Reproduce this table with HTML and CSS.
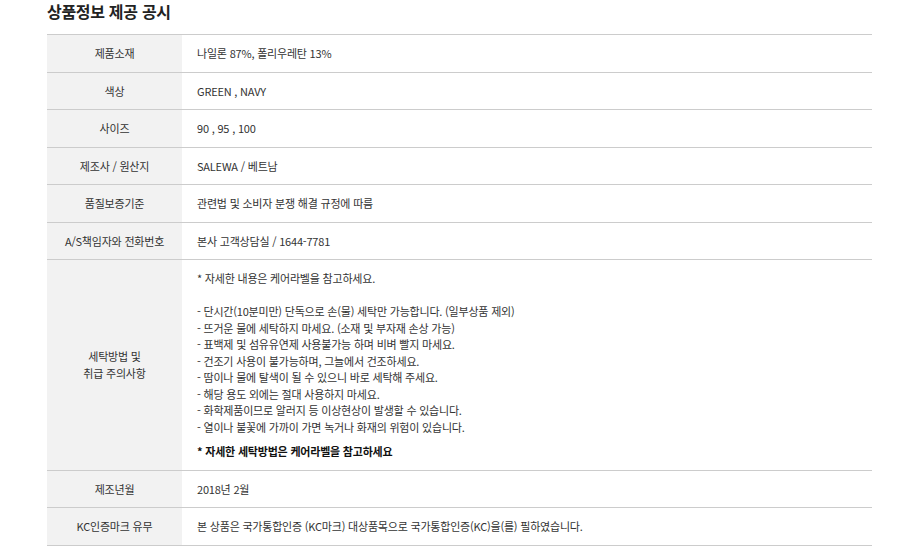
FILE: index.html
```html
<!DOCTYPE html>
<html lang="ko">
<head>
  <meta charset="UTF-8" />
  <meta name="viewport" content="width=device-width, initial-scale=1" />
  <title>상품정보 제공 공시</title>
  <link rel="stylesheet" href="styles.css">
</head>
<body>
  <div class="notice">
    <h2 class="notice-title">상품정보 제공 공시</h2>
    <table class="info-table">
      <tr>
        <th>제품소재</th>
        <td>나일론 87%, 폴리우레탄 13%</td>
      </tr>
      <tr>
        <th>색상</th>
        <td>GREEN , NAVY</td>
      </tr>
      <tr>
        <th>사이즈</th>
        <td>90 , 95 , 100</td>
      </tr>
      <tr>
        <th>제조사 / 원산지</th>
        <td>SALEWA / 베트남</td>
      </tr>
      <tr>
        <th>품질보증기준</th>
        <td>관련법 및 소비자 분쟁 해결 규정에 따름</td>
      </tr>
      <tr>
        <th>A/S책임자와 전화번호</th>
        <td>본사 고객상담실 / 1644-7781</td>
      </tr>
      <tr>
        <th>세탁방법 및<br>취급 주의사항</th>
        <td>
          <p>* 자세한 내용은 케어라벨을 참고하세요.</p>
          <p class="gap">- 단시간(10분미만) 단독으로 손(물) 세탁만 가능합니다. (일부상품 제외)<br>
          - 뜨거운 물에 세탁하지 마세요. (소재 및 부자재 손상 가능)<br>
          - 표백제 및 섬유유연제 사용불가능 하며 비벼 빨지 마세요.<br>
          - 건조기 사용이 불가능하며, 그늘에서 건조하세요.<br>
          - 땀이나 물에 탈색이 될 수 있으니 바로 세탁해 주세요.<br>
          - 해당 용도 외에는 절대 사용하지 마세요.<br>
          - 화학제품이므로 알러지 등 이상현상이 발생할 수 있습니다.<br>
          - 열이나 불꽃에 가까이 가면 녹거나 화재의 위험이 있습니다.</p>
          <p class="care-note">* 자세한 세탁방법은 케어라벨을 참고하세요</p>
        </td>
      </tr>
      <tr>
        <th>제조년월</th>
        <td>2018년 2월</td>
      </tr>
      <tr>
        <th>KC인증마크 유무</th>
        <td>본 상품은 국가통합인증 (KC마크) 대상품목으로 국가통합인증(KC)을(를) 필하였습니다.</td>
      </tr>
    </table>
  </div>
</body>
</html>
```

FILE: styles.css
```css
* {
  margin: 0; padding: 0; box-sizing: border-box;
}
body {
  background: #fff;
  color: #333;
  font-family: "Noto Sans CJK KR", "Noto Sans", sans-serif;
}
.notice {
  padding-left: 47px;
  width: 872px;
}
.notice-title {
  font-size: 16px;
  font-weight: bold;
  line-height: 20px;
  padding-top: 1px;
  color: #222;
  height: 34px;
  letter-spacing: -0.3px;
}
.info-table {
  width: 825px;
  border-collapse: collapse;
  border-top: 1px solid #ccc;
  font-size: 11px;
  line-height: 16.5px;
  letter-spacing: -0.2px;
}
.info-table th,
.info-table td {
  border-bottom: 1px solid #ccc;
  padding: 10px 0;
  vertical-align: middle;
}
.info-table th {
  width: 135px;
  background: #f2f2f2;
  font-weight: normal;
  text-align: center;
  color: #333;
}
.info-table td {
  padding-left: 15px;
  text-align: left;
  color: #333;
}
.gap {
  margin-top: 16.5px;
}
.care-note {
  margin-top: 8px;
  font-weight: bold;
  color: #111;
}
```
